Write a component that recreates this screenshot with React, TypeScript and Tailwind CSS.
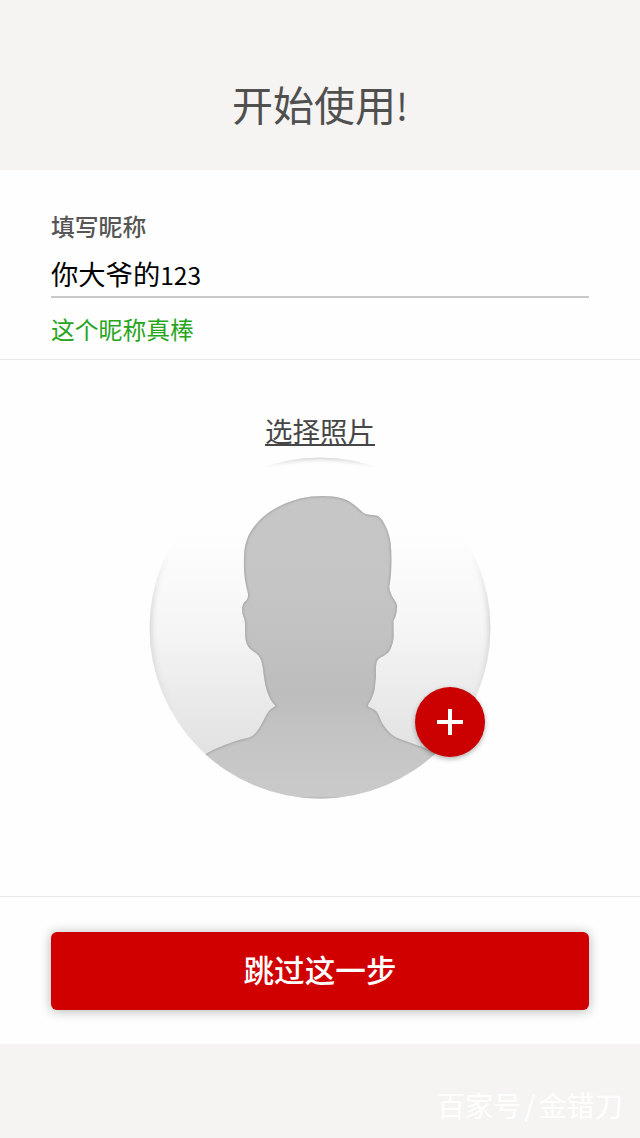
import { FC } from "react";

const silhouette =
  "M173.7 39C166 39 158 39.8 151 41.5C141 44 132 48 124.3 52.5C118 56.5 112 61 107.7 66.5C103 72 99 78 97.5 84C95.5 90 95 95 95 100C94.8 106 94.8 111 95.3 117C96 124 97 129 98.5 134.5C99.3 137.5 99.3 140 98 142.5C96.5 144.5 94.5 145.5 93.8 148C92.8 151 92.8 154 93.5 157C94.5 160 95.8 162.5 96 166.5L96.2 180C96.5 184 97.5 187 99.3 189.7C102 193.5 106.5 195 109.5 198.5C112 202 113 205.5 113.7 210C114.5 216 115 221 116 226.5C117 232 119 237 121 241.5C122.5 244.5 124.5 246.5 126.7 249C124 250.5 121 252 119.3 254.7C115 261 112.5 269 107.7 274.7C105.5 277.5 103 279.8 99.3 280.7C89 283 80 286 71 290C66 292 61 294 56 297.5L60 342L286 342L286 295C274 289.5 260 285.5 247.7 280.7C242 277.5 238 273.5 234.3 268C231.5 264 230.5 258.5 227.7 254.7C225 251.5 221 251.5 218.7 249C219.8 246 221.8 244 222.7 241.3C224.2 237.5 225.8 234 226 229.7C226.2 225 227.2 221 227 216.3C226.8 212 226.8 207 228.3 203.7C230.3 200.3 233.5 200 236 198C238.5 196.5 239.8 195 241 193C243 189 244.5 184 244.7 179.7L244.5 166C244.3 162 246.5 161 247 158C247.8 154.5 248.3 151 248 148C247.3 145.5 246.3 144.5 245 142.3C242.5 138.5 240.5 134 240.3 129.7C241.5 123 242.2 117 242.3 109.7C242.5 101 242.5 94 241.7 86.3C240.8 80 239 73.5 236 68C234 64 231.5 60 228.3 58.8C225 57.5 221 58.5 217.7 57.3C215.5 56.8 214.2 55.8 212.7 54.3C208.5 50.5 203 45.5 197.7 43C190 39.8 182 39 173.7 39Z";

const Avatar: FC = () => (
  <svg viewBox="0 0 342 342" className="block h-[342px] w-[342px]">
    <defs>
      <linearGradient id="backdrop" x1="0" y1="0" x2="0" y2="1">
        <stop offset="0.22" stopColor="#fefefe" />
        <stop offset="0.5" stopColor="#f5f5f5" />
        <stop offset="0.88" stopColor="#e1e1e1" />
      </linearGradient>
      <linearGradient id="person" x1="0" y1="39" x2="0" y2="342" gradientUnits="userSpaceOnUse">
        <stop offset="0" stopColor="#c6c6c6" />
        <stop offset="0.3" stopColor="#c5c5c5" />
        <stop offset="0.65" stopColor="#bdbdbd" />
        <stop offset="0.85" stopColor="#c6c6c6" />
        <stop offset="1" stopColor="#cacaca" />
      </linearGradient>
      <linearGradient id="rimFade" x1="0" y1="0" x2="0" y2="342" gradientUnits="userSpaceOnUse">
        <stop offset="0" stopColor="#fff" />
        <stop offset="0.03" stopColor="#000" />
        <stop offset="0.27" stopColor="#000" />
        <stop offset="0.48" stopColor="#ccc" />
        <stop offset="0.6" stopColor="#888" />
        <stop offset="0.75" stopColor="#000" />
      </linearGradient>
      <mask id="rimMask" maskUnits="userSpaceOnUse" x="0" y="0" width="342" height="342">
        <rect width="342" height="342" fill="url(#rimFade)" />
      </mask>
      <clipPath id="round">
        <circle cx="171" cy="171" r="170.5" />
      </clipPath>
      <clipPath id="personClip">
        <path d={silhouette} />
      </clipPath>
      <filter id="soft">
        <feGaussianBlur stdDeviation="2.5" />
      </filter>
      <filter id="edge">
        <feGaussianBlur stdDeviation="1" />
      </filter>
    </defs>
    <g clipPath="url(#round)">
      <rect width="342" height="342" fill="url(#backdrop)" />
      <g mask="url(#rimMask)">
        <circle cx="171" cy="171" r="171" fill="none" stroke="#c4c4c4" strokeWidth="5" filter="url(#soft)" />
      </g>
      <path d={silhouette} fill="url(#person)" />
      <g clipPath="url(#personClip)">
        <path d={silhouette} fill="none" stroke="#a3a3a3" strokeWidth="2" filter="url(#edge)" />
      </g>
    </g>
  </svg>
);

const AddButton: FC = () => (
  <button
    aria-label="+"
    className="absolute left-[266px] top-[230px] flex h-[70px] w-[70px] items-center justify-center rounded-full bg-[#cb0000] shadow-[0_2px_5px_rgba(0,0,0,0.3)]"
  >
    <svg viewBox="0 0 28 28" className="h-7 w-7" stroke="#fff" strokeWidth="4">
      <path d="M1 14H27M14 1V27" />
    </svg>
  </button>
);

export default function App() {
  return (
    <div className="flex h-[1138px] w-[640px] flex-col overflow-hidden bg-[#f5f4f3] font-['Noto_Sans_CJK_SC',sans-serif]">
      <header className="flex h-[170px] shrink-0 justify-center pt-[73px]">
        <h1 className="text-[41px] leading-[60px] text-[#50504f]">
          开始使用<span className="text-[37px]">!</span>
        </h1>
      </header>

      <main className="flex h-[874px] shrink-0 flex-col bg-[#fefefe]">
        <section className="h-[190px] border-b border-[#e8e8e8] px-[51px] pt-[39px]">
          <div className="text-[23.8px] font-medium leading-[34px] text-[#565656]">填写昵称</div>
          <div className="mt-2.5 h-[45px] border-b-2 border-[#c9c9c9] text-[27.3px] leading-[40px] text-black">
            你大爷的<span className="text-[24.5px]">123</span>
          </div>
          <p className="mt-[13px] text-[23.8px] leading-[36px] text-[#27a51d]">这个昵称真棒</p>
        </section>

        <section className="flex h-[537px] flex-col items-center border-b border-[#e8e8e8] pt-[50px]">
          <a className="h-[47px] text-[27.5px] leading-[40px] text-[#464646] underline decoration-2 underline-offset-2 [text-decoration-skip-ink:none]">
            选择照片
          </a>
          <div className="relative">
            <Avatar />
            <AddButton />
          </div>
        </section>

        <section className="px-[51px] pt-[35px]">
          <button className="flex h-[78px] w-full items-center justify-center rounded-md bg-[#d00000] pb-0.5 text-[30.6px] font-medium text-white shadow-[0_1px_12px_rgba(0,0,0,0.3)]">
            跳过这一步
          </button>
        </section>
      </main>

      <footer className="flex flex-1 justify-end pr-[17px] pt-10 text-[28.2px] leading-[42px] text-white/90">
        百家号<span className="px-[3px]">/</span>金错刀
      </footer>
    </div>
  );
}
